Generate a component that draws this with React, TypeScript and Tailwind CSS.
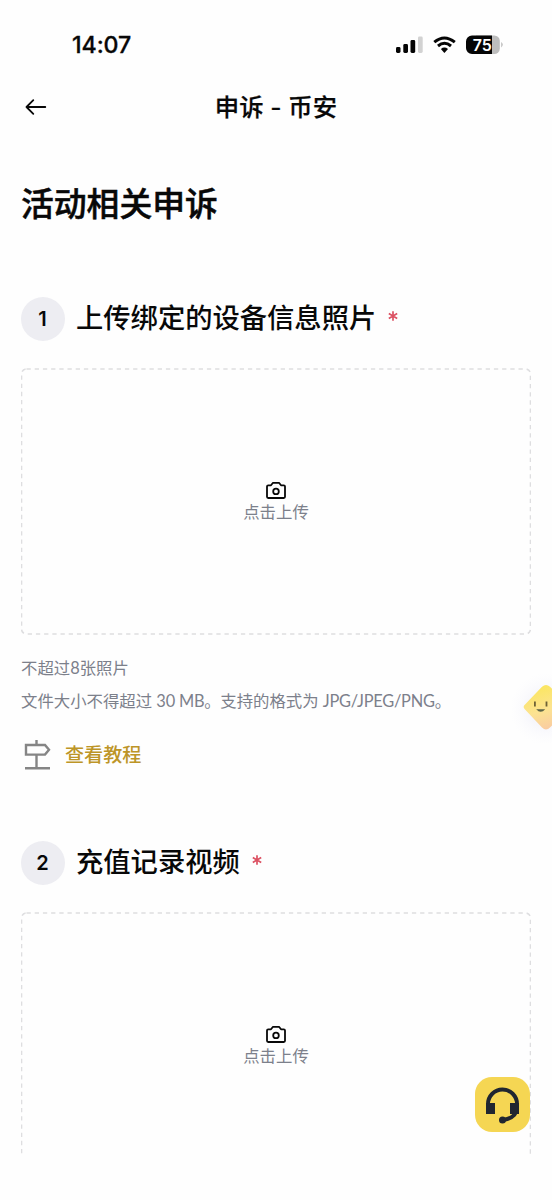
import React from 'react';

function StatusBar() {
  return (
    <div className="flex h-[74px] shrink-0 items-start justify-between pl-[72px] pr-[48px] pt-[31px]">
      <span className="font-['Inter','Liberation_Sans',sans-serif] text-[23.2px] font-medium leading-7 tracking-[-0.1px] [-webkit-text-stroke:0.3px_#080808]">14:07</span>
      <div className="flex pt-[4px]">
        <svg width="110" height="20" viewBox="0 0 110 20">
          <g fill="#050505">
            <rect x="2" y="12" width="4.5" height="6" rx="1.4" />
            <rect x="9.3" y="9" width="4.7" height="9" rx="1.4" />
            <rect x="16.5" y="5" width="4.7" height="13" rx="1.4" />
          </g>
          <rect x="24" y="1.5" width="4.7" height="16.5" rx="1.4" fill="#d2d2d2" />
          <g fill="none" stroke="#050505" strokeWidth="3">
            <path d="M40.3 7.2 Q50.3 -1.2 60.8 7.2" />
            <path d="M44 11 Q50.4 5.5 57 11" />
          </g>
          <path d="M46.9 14 Q50.4 11.1 54 14 L50.4 17.9 Z" fill="#050505" />
          <path d="M82 .5 H100.3 a5.5 5.5 0 0 1 5.5 5.5 V13.5 A5.5 5.5 0 0 1 100.3 19 H82Z" fill="#bdbdbd" />
          <path d="M98 .5 H78 A6 6 0 0 0 72 6.5 V13 A6 6 0 0 0 78 19 H98Z" fill="#050505" />
          <path d="M107.2 7 Q110.4 9.7 107.2 12.4Z" fill="#bdbdbd" />
          <text x="88.3" y="15.5" textAnchor="middle" fill="white" className="font-['Inter',sans-serif] text-[16px] font-semibold">75</text>
        </svg>
      </div>
    </div>
  );
}

function Camera() {
  return (
    <svg width="22" height="20" viewBox="0 0 22 20" fill="none" stroke="#080808" strokeWidth="1.8" strokeLinejoin="round">
      <path d="M3.2 5.3 H6 L8 2.8 H14 L16 5.3 H18.8 Q20 5.3 20 6.5 V16.8 Q20 18 18.8 18 H3.2 Q2 18 2 16.8 V6.5 Q2 5.3 3.2 5.3Z" />
      <circle cx="11" cy="11.4" r="2.8" />
    </svg>
  );
}

function Step({ number, title }: { number: number; title: string }) {
  return (
    <section>
      <div className="flex h-11 items-center">
        <span className="flex size-11 items-center justify-center rounded-full bg-[#ededf2] pr-px font-['Inter',sans-serif] text-[20px] font-semibold">{number}</span>
        <h2 className="-mt-[6px] ml-[11px] whitespace-nowrap text-[27.3px] font-medium leading-10">{title}</h2>
        <svg className="-mt-[7px] ml-[12px]" width="10" height="12" viewBox="0 0 10 12" stroke="#dc5263" strokeWidth="1.7" aria-label="必填">
          <path d="M5 1.2 V10.8 M.8 3.6 L9.2 8.4 M.8 8.4 L9.2 3.6" />
        </svg>
      </div>
      <button className="relative mt-[27px] flex h-[267px] w-full flex-col items-center justify-center">
        <svg className="absolute inset-0" width="510" height="267" viewBox="0 0 510 267" fill="none">
          <rect x=".5" y="1" width="509" height="265" rx="5" stroke="#dedee0" strokeWidth="1.6" strokeDasharray="4.3 3.9" />
        </svg>
        <Camera />
        <span className="-mt-px text-[16.4px] leading-[24px] text-[#7c808b]">点击上传</span>
      </button>
    </section>
  );
}

function Signpost() {
  return (
    <svg width="28" height="32" viewBox="0 0 28 32" fill="none" stroke="#858585" strokeWidth="2.4">
      <path d="M13.5 2 V7 M13.5 17 V30 M2 30.2 H27 M3 7 H22 L26 11.8 L22 16.6 H3Z" />
    </svg>
  );
}

export default function App() {
  return (
    <div className="relative h-[1200px] w-[552px] overflow-hidden bg-[#fefefe] font-['Noto_Sans_CJK_SC',sans-serif] text-[#080808]">
      <div className="flex h-[1154px] flex-col overflow-hidden">
        <StatusBar />
        <header className="grid h-[66px] shrink-0 grid-cols-[72px_1fr_72px] items-center">
          <svg className="ml-6" width="24" height="20" viewBox="0 0 24 20" fill="none" stroke="#080808" strokeWidth="1.8" strokeLinecap="round" strokeLinejoin="round">
            <path d="M21.3 10 H2.5 M9.3 3.2 L2.5 10 L9.3 16.8" />
          </svg>
          <h1 className="mt-px text-center font-['Inter','Noto_Sans_CJK_SC',sans-serif] text-[24.4px] font-medium tracking-[0.1px] [-webkit-text-stroke:0.2px_#080808]">申诉 - 币安</h1>
        </header>
        <main className="flex flex-col px-[21px]">
          <h2 className="mt-[38px] text-[32.8px] font-medium leading-[48px] [-webkit-text-stroke:0.5px_#080808]">活动相关申诉</h2>
          <div className="mt-[71px]">
            <Step number={1} title="上传绑定的设备信息照片" />
            <div className="mt-[16px] font-['Lato','Noto_Sans_CJK_SC',sans-serif] text-[16.4px] leading-[33px] text-[#7c808b]">
              <p>不超过8张照片</p>
              <p className="whitespace-nowrap">文件大小不得超过 <span className="tracking-[-0.2px]">30 MB</span><span className="tracking-[-0.5px]">。</span>支持的格式为 <span className="tracking-[-0.25px]">JPG/JPEG/PNG</span>。</p>
            </div>
            <div className="mt-[21px] flex h-8 items-center gap-[14px] pl-[2px]">
              <Signpost />
              <a className="text-[19.1px] font-medium leading-8 text-[#bd9527]">查看教程</a>
            </div>
          </div>
          <div className="mt-[71px]">
            <Step number={2} title="充值记录视频" />
          </div>
        </main>
      </div>
      <svg className="absolute right-0 top-[670px]" width="52" height="80" viewBox="0 0 52 80">
        <defs>
          <linearGradient id="diamond" x1=".35" y1="0" x2=".65" y2="1">
            <stop stopColor="#fbe65d" />
            <stop offset=".55" stopColor="#fce391" />
            <stop offset="1" stopColor="#f9c9a3" />
          </linearGradient>
          <radialGradient id="glow">
            <stop stopColor="#dfdff3" stopOpacity=".7" />
            <stop offset="1" stopColor="#f4f4fb" stopOpacity="0" />
          </radialGradient>
        </defs>
        <circle cx="46" cy="39" r="36" fill="url(#glow)" />
        <path d="M24.8 34.8 L42 16.8 Q46 13 50 16.8 L68 34.8 Q70 37 68 39.2 L50 57.6 Q46 61.4 42 57.6 L24.8 39.2 Q22.5 37 24.8 34.8Z" fill="url(#diamond)" />
        <path d="M34.9 31.5 V36.5 M46.5 31.5 V36.5" stroke="#6d6135" strokeWidth="1.8" />
        <path d="M36.2 39.3 H45.2 Q40.7 44.3 36.2 39.3Z" fill="#5d6546" />
      </svg>
      <button className="absolute left-[475px] top-[1077px] flex h-[55px] w-[55px] items-center justify-center rounded-[17px] bg-[#f5d653]" aria-label="客服">
        <svg width="55" height="55" viewBox="0 0 55 55">
          <path d="M13 30 V27 A14.3 14.3 0 0 1 42 27 V31 Q41.5 41 28 43" fill="none" stroke="#202630" strokeWidth="3.9" />
          <path d="M11 26 H20 V37 H11Z M35 26 H44 V37 H35Z" fill="#202630" />
          <circle cx="27.5" cy="43" r="3.5" fill="#202630" />
        </svg>
      </button>
    </div>
  );
}
